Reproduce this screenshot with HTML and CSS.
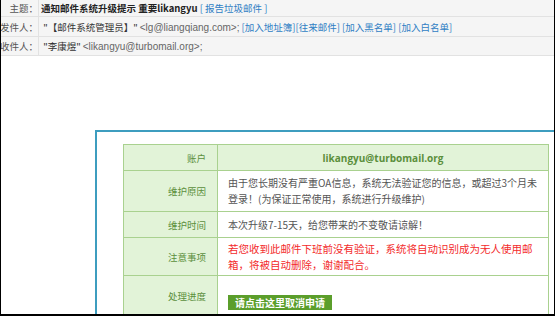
FILE: index.html
```html
<!DOCTYPE html>
<html>

<head>
  <meta http-equiv="Content-Type" content="text/html; charset=utf-8">
  <link rel="stylesheet" href="styles.css">
</head>

<body>
  <div class="frame">
    <div class="head">
      <div class="head-row row-subject">
        <div class="head-label">主题：</div>
        <div class="head-value"><strong>通知邮件系统升级提示 重要likangyu</strong> <a class="link">[ 报告垃圾邮件 ]</a></div>
      </div>
      <div class="head-row row-from">
        <div class="head-label">发件人：</div>
        <div class="head-value">&nbsp;"【邮件系统管理员】" <span class="addr">&lt;lg@liangqiang.com&gt;;</span>
          <a class="link">[加入地址簿]</a><a class="link">[往来邮件]</a> <a class="link">[加入黑名单]</a> <a class="link">[加入白名单]</a>
        </div>
      </div>
      <div class="head-row row-to">
        <div class="head-label">收件人：</div>
        <div class="head-value">&nbsp;"李康煜" <span class="addr">&lt;likangyu@turbomail.org&gt;;</span></div>
      </div>
    </div>

    <div class="mail-body">
      <div class="notice">
        <table class="info">
          <tr class="first">
            <th>账户</th>
            <td class="account">likangyu@turbomail.org</td>
          </tr>
          <tr>
            <th>维护原因</th>
            <td class="tall">由于您长期没有严重OA信息，系统无法验证您的信息，或超过3个月未登录！(为保证正常使用，系统进行升级维护)</td>
          </tr>
          <tr>
            <th>维护时间</th>
            <td>本次升级7-15天，给您带来的不变敬请谅解！</td>
          </tr>
          <tr>
            <th>注意事项</th>
            <td class="warn">若您收到此邮件下班前没有验证，系统将自动识别成为无人使用邮箱，将被自动删除，谢谢配合。</td>
          </tr>
          <tr>
            <th class="progress-label">处理进度</th>
            <td class="progress"><a class="btn">请点击这里取消申请</a></td>
          </tr>
        </table>
      </div>
    </div>
  </div>
</body>

</html>
```

FILE: styles.css
```css
html, body {
  margin: 0;
  padding: 0;
}

body {
  width: 555px;
  height: 316px;
  overflow: hidden;
  font-family: "Noto Sans CJK SC", sans-serif;
  color: #333;
}

.frame {
  box-sizing: border-box;
  width: 555px;
  height: 316px;
  border: 1px solid #000;
  border-top: none;
  border-bottom-width: 2px;
  overflow: hidden;
}

.head {
  background: #f5f5f5;
  font-size: 9.5px;
}

.head-row {
  display: flex;
  align-items: center;
  border-bottom: 1px solid #e2e2e2;
}

.row-subject {
  height: 16px;
}

.row-from {
  height: 19px;
}

.row-to {
  height: 18px;
}

.head-label {
  align-self: stretch;
  display: flex;
  align-items: center;
  justify-content: flex-end;
  width: 37px;
  flex: none;
  border-right: 1px solid #e2e2e2;
  color: #555;
  white-space: nowrap;
}

.head-value {
  padding-left: 2px;
  white-space: nowrap;
  color: #333;
}

.head-value strong {
  color: #222;
}

.addr {
  color: #666;
  font-family: "Liberation Sans", "Noto Sans CJK SC", sans-serif;
  font-size: 10px;
}

.link {
  color: #2f7ec4;
}

.mail-body {
  padding: 74px 0 0 94px;
}

.notice {
  border: 2px solid #3d9dbf;
  border-right: none;
  border-bottom: none;
  padding: 12px 0 40px 26px;
  width: 500px;
}

.info {
  border-collapse: collapse;
  width: 426px;
}

.info th,
.info td {
  border: 1px solid #a9d18f;
  padding: 0 6px 0 10px;
}

.info th {
  width: 72px;
  padding-right: 11px;
  background: #e2f3d8;
  color: #5b8f3c;
  font-weight: normal;
  font-size: 9.5px;
  text-align: right;
  height: 25px;
}

.info td {
  color: #555;
  background: #fff;
  font-size: 10px;
  line-height: 16px;
}

.info .first td {
  background: #e2f3d8;
}

.info td.account {
  text-align: center;
  font-family: "Open Sans", sans-serif;
  font-weight: bold;
  font-size: 10px;
  color: #5b8f3c;
  padding-right: 10px;
}

.info td.tall {
  height: 40px;
}

.info td.warn {
  color: #f32b2b;
  font-size: 10.5px;
  height: 37px;
  padding-right: 10px;
}

.info th.progress-label {
  height: 39px;
}

.info td.progress {
  vertical-align: bottom;
  padding-bottom: 4px;
}

.btn {
  display: inline-block;
  background: #5b9e2b;
  color: #fff;
  font-weight: bold;
  font-size: 10px;
  padding: 0 7px;
  line-height: 15px;
}
```
